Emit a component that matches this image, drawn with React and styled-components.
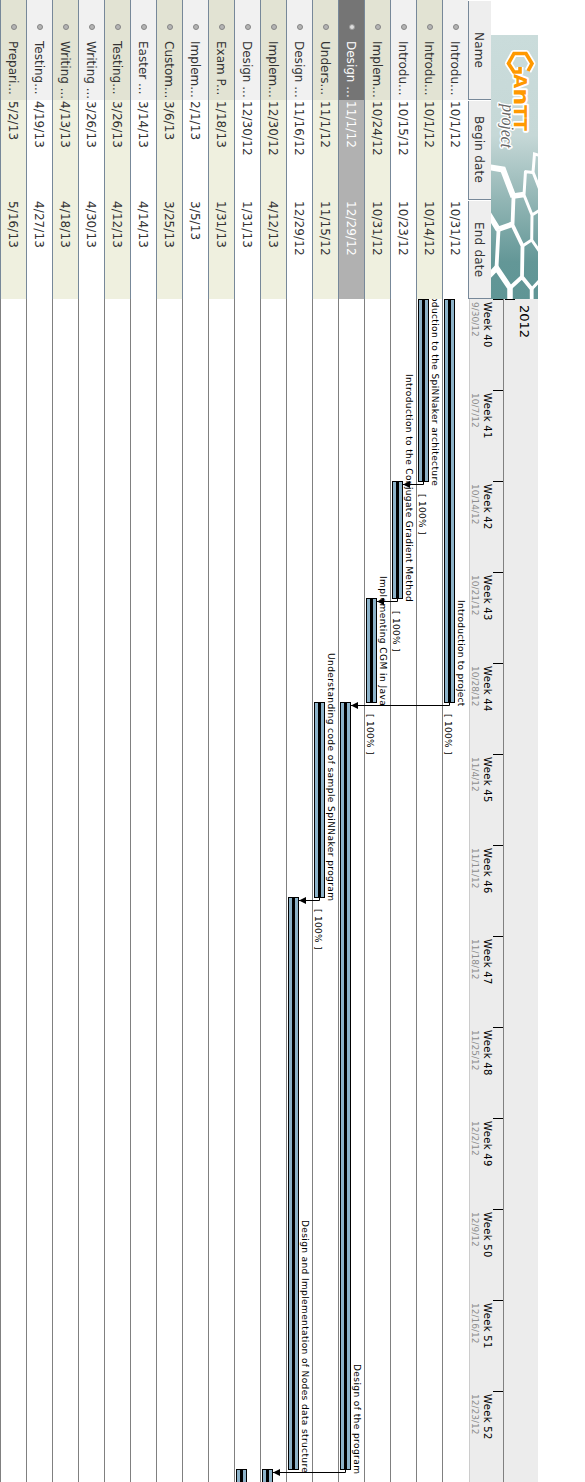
import React from "react";
import styled, { createGlobalStyle } from "styled-components";

const Global = createGlobalStyle`
  body { margin: 0; background: #fff; overflow: hidden; }
  * { box-sizing: border-box; }
`;

const slate = "#778899";
const gridGrey = "#808080";

/* Vertical writing: inline axis runs down the page, blocks stack right to left. */
const Sheet = styled.main`
  writing-mode: vertical-rl;
  display: flex;
  width: 585px;
  height: 1482px;
  overflow: hidden;
  background: #fff;
  color: #333;
  font: 12px "DejaVu Sans", sans-serif;
  white-space: nowrap;
`;

const TaskPane = styled.section`
  flex: none;
  inline-size: 299px;
  padding-block-start: 47px;
`;

const LogoBox = styled.div`
  block-size: 47px;
  inline-size: 264px;
  margin-inline-start: 35px;
  svg { display: block; writing-mode: horizontal-tb; }
`;

const HeaderRow = styled.div`
  display: flex;
  block-size: 23px;
  padding-inline-start: 1px;
`;

const HeaderCell = styled.div`
  block-size: 23px;
  inline-size: ${(p) => p.$size}px;
  margin-inline-end: ${(p) => p.$gap || 0}px;
  border-block-end: 1px solid ${slate};
  border-inline-end: 1px solid ${slate};
  background: #eee;
  line-height: 24px;
  text-align: center;
  letter-spacing: 0.2px;
`;

const TaskRow = styled.div`
  display: flex;
  block-size: 26px;
  line-height: 26px;
  border-block-end: 1px solid ${slate};
  color: ${(p) => (p.$tone === "selected" ? "#fff" : "#333")};
  background: ${(p) => ({ plain: "#fff", tinted: "#eff0df", selected: "#b1b1b1" })[p.$tone]};
`;

const NameCell = styled.div`
  display: flex;
  inline-size: 100px;
  padding-inline-start: 24px;
  gap: 10.5px;
  background: ${(p) => ({ plain: "#f1f1f1", tinted: "#e2e3d3", selected: "#757575" })[p.$tone]};
`;

const Dot = styled.i`
  flex: none;
  align-self: center;
  width: 6px;
  height: 6px;
  border-radius: 50%;
  border: 1px solid ${(p) => (p.$tone === "selected" ? "#999" : "#858585")};
  background: ${(p) => (p.$tone === "selected" ? "#ddd" : "#b4b4b4")};
`;

const DateCell = styled.div`
  block-size: 25px;
  line-height: 27px;
  inline-size: 100px;
  padding-inline-start: 1.5px;
  letter-spacing: 0.1px;
`;

const TaskName = styled.span`
  block-size: 25px;
  line-height: 27px;
`;

const Timeline = styled.section`
  position: relative;
  flex: 1;
  min-inline-size: 0;
  padding-block-start: 47px;
  color: #000;
`;

const YearBand = styled.div`
  position: relative;
  block-size: 35px;
  padding-inline-start: 5.5px;
  border-block-end: 1px solid ${gridGrey};
  background: #ececec;
  font-size: 13px;
  line-height: 28px;
  &::before {
    content: "";
    position: absolute;
    left: 1px;
    top: 0;
    width: 10px;
    height: 1px;
    background: #000;
  }
`;

const WeekBand = styled.div`
  display: flex;
  block-size: 34px;
  border-block-end: 1px solid #ccc;
  background: #ececec;
  overflow: hidden;
`;

const Week = styled.div`
  position: relative;
  flex: none;
  inline-size: 91px;
  padding-block-start: 9px;
  padding-inline-start: 2.5px;
  &::before {
    content: "";
    position: absolute;
    right: 0;
    top: 0;
    width: 10px;
    height: 1px;
    background: #000;
  }
`;

const WeekName = styled.div`
  font-size: 10px;
  line-height: 13px;
  letter-spacing: 0.35px;
`;

const WeekDate = styled.div`
  font-size: 9px;
  line-height: 12px;
  color: #8c8c8c;
`;

const Lanes = styled.div`
  padding-block-start: 1px;
`;

const Lane = styled.div`
  position: relative;
  block-size: 26px;
  padding-block-start: 13px;
  border-block-end: 1px solid ${gridGrey};
  overflow: hidden;
`;

const Bar = styled.div`
  block-size: 11px;
  inline-size: ${(p) => p.$length}px;
  margin-inline-start: ${(p) => p.$start}px;
  padding-block: 3px;
  border: 1px solid #000;
  background: #8cb2c8;
  &::before {
    content: "";
    display: block;
    block-size: 3px;
    background: #000;
  }
`;

const BarLabel = styled.span`
  position: absolute;
  bottom: calc(100% - ${(p) => p.$end}px);
  right: 0;
  font-size: 9px;
  line-height: 14px;
  letter-spacing: ${(p) => p.$tracking}px;
`;

const Progress = styled.span`
  position: absolute;
  top: ${(p) => p.$at}px;
  left: 0;
  font-size: 9px;
  line-height: 9px;
  letter-spacing: 0.3px;
`;

const Links = styled.svg`
  position: absolute;
  left: 0;
  top: 0;
`;

const tasks = [
  { name: "Introdu...", begin: "10/1/12", end: "10/31/12", bar: [0, 404], label: "Introduction to project", labelEnd: 407, tracking: 0.26, done: 415 },
  { name: "Introdu...", begin: "10/1/12", end: "10/14/12", bar: [0, 183], label: "Introduction to the SpiNNaker architecture", labelEnd: 187, tracking: 0.38, done: 195 },
  { name: "Introdu...", begin: "10/15/12", end: "10/23/12", bar: [182, 118], label: "Introduction to the Conjugate Gradient Method", labelEnd: 303.5, tracking: 0.37, done: 312 },
  { name: "Implem...", begin: "10/24/12", end: "10/31/12", bar: [299, 105], label: "Implementing CGM in Java", labelEnd: 407, tracking: 0.45, done: 415 },
  { name: "Design ...", begin: "11/1/12", end: "12/29/12", bar: [403, 768], label: "Design of the program", labelEnd: 1175.5, tracking: 0.42, selected: true },
  { name: "Unders...", begin: "11/1/12", end: "11/15/12", bar: [403, 196], label: "Understanding code of sample SpiNNaker program", labelEnd: 602.5, tracking: 0.42, done: 610 },
  { name: "Design ...", begin: "11/16/12", end: "12/29/12", bar: [598, 573], label: "Design and Implementation of Nodes data structure", labelEnd: 1174, tracking: 0.38 },
  { name: "Implem...", begin: "12/30/12", end: "4/12/13", bar: [1170, 1200] },
  { name: "Design ...", begin: "12/30/12", end: "1/31/13", bar: [1170, 400] },
  { name: "Exam P...", begin: "1/18/13", end: "1/31/13" },
  { name: "Implem...", begin: "2/1/13", end: "3/5/13" },
  { name: "Custom...", begin: "3/6/13", end: "3/25/13" },
  { name: "Easter ...", begin: "3/14/13", end: "4/14/13" },
  { name: "Testing...", begin: "3/26/13", end: "4/12/13" },
  { name: "Writing ...", begin: "3/26/13", end: "4/30/13" },
  { name: "Writing ...", begin: "4/13/13", end: "4/18/13" },
  { name: "Testing...", begin: "4/19/13", end: "4/27/13" },
  { name: "Prepari...", begin: "5/2/13", end: "5/16/13" },
];

const weeks = [
  "9/30/12", "10/7/12", "10/14/12", "10/21/12", "10/28/12", "11/4/12", "11/11/12",
  "11/18/12", "11/25/12", "12/2/12", "12/9/12", "12/16/12", "12/23/12",
];

/* [bar centre, source bar end, link position, target bar edge] */
const links = [
  [449.5, 404, 406.5, 351],
  [423.5, 183, 185.5, 403],
  [397.5, 300, 302.5, 377],
  [319.5, 599, 601.5, 299],
  [345.5, 1171, 1173.5, 273],
];

const gMark = "M528 71L532 63.500L526 53.500H514L508.500 63.500L514 72H520V67";

function Logo() {
  return (
    <svg width="47" height="264" viewBox="491 35 47 264">
      <defs>
        <linearGradient id="sky" x1="0" y1="0" x2="0" y2="1">
          <stop offset="0" stopColor="#cadcdb" />
          <stop offset="0.38" stopColor="#c6d8d7" />
          <stop offset="0.62" stopColor="#93b6b5" />
          <stop offset="0.86" stopColor="#639797" />
          <stop offset="1" stopColor="#5f9595" />
        </linearGradient>
      </defs>
      <rect x="491" y="35" width="47" height="264" fill="url(#sky)" />
      <g fill="none" stroke="#fff">
        <path strokeWidth="6" d="M488 167L503 169.500L513.500 197" />
        <path strokeWidth="5.500" d="M513.500 196L524 194.500M499 229L513 224M488 213L498.500 230M488 277L496.500 268L510 288V300" />
        <path strokeWidth="3.800" d="M513.500 197L512.500 225L522.500 246L522 277L531.700 289V300M498.500 230L496.500 268M510 288L522 277" />
        <path strokeWidth="3" d="M525.500 171L524 195L532 215L531.700 240L522.500 246M524.500 171.500L533 172.500L534.500 154L540 155.500M532 215L540 210M531.700 240L540 252M531.700 289L540 280M533 172L540 190" />
      </g>
      <g strokeLinejoin="round">
        <path d={gMark} fill="none" stroke="#fff" strokeWidth="7" />
        <g transform="translate(513.500 74) rotate(90)" fontFamily="DejaVu Sans, sans-serif" fontWeight="bold" fontSize="17" fill="#f90" stroke="#fff" strokeWidth="3.500" paintOrder="stroke">
          <text textLength="57" lengthAdjust="spacingAndGlyphs">A<tspan fontSize="22">n</tspan>TT</text>
        </g>
        <path d={gMark} fill="none" stroke="#f90" strokeWidth="3.600" strokeLinejoin="miter" />
        <g transform="translate(502.500 104) rotate(92)" fontFamily="Liberation Serif, serif" fontStyle="italic" fontSize="18" fill="#666" stroke="#fff" strokeWidth="3" paintOrder="stroke">
          <text textLength="44" lengthAdjust="spacingAndGlyphs">project</text>
        </g>
      </g>
    </svg>
  );
}

export default function App() {
  return (
    <>
      <Global />
      <Sheet>
        <TaskPane>
          <LogoBox><Logo /></LogoBox>
          <HeaderRow>
            <HeaderCell $size={99} $gap={1}>Name</HeaderCell>
            <HeaderCell $size={99} $gap={1}>Begin date</HeaderCell>
            <HeaderCell $size={98}>End date</HeaderCell>
          </HeaderRow>
          {tasks.map((t, i) => {
            const tone = t.selected ? "selected" : i % 2 ? "tinted" : "plain";
            return (
              <TaskRow key={i} $tone={tone}>
                <NameCell $tone={tone}>
                  <Dot $tone={tone} />
                  <TaskName>{t.name}</TaskName>
                </NameCell>
                <DateCell>{t.begin}</DateCell>
                <DateCell>{t.end}</DateCell>
              </TaskRow>
            );
          })}
        </TaskPane>
        <Timeline>
          <YearBand>2012</YearBand>
          <WeekBand>
            {weeks.map((d, i) => (
              <Week key={d}>
                <WeekName>Week {40 + i}</WeekName>
                <WeekDate>{d}</WeekDate>
              </Week>
            ))}
          </WeekBand>
          <Lanes>
            {tasks.map((t, i) => (
              <Lane key={i}>
                {t.bar && <Bar $start={t.bar[0]} $length={t.bar[1]} />}
                {t.label && <BarLabel $end={t.labelEnd} $tracking={t.tracking}>{t.label}</BarLabel>}
                {t.done && <Progress $at={t.done}>[ 100% ]</Progress>}
              </Lane>
            ))}
          </Lanes>
          <Links width="470" height="1183">
            {links.map(([x, from, y, tip]) => (
              <g key={y}>
                <path d={`M${x} ${from}V${y}H${tip}`} fill="none" stroke="#000" />
                <path d={`M${tip} ${y}l7 -3.500v7z`} />
              </g>
            ))}
          </Links>
        </Timeline>
      </Sheet>
    </>
  );
}
